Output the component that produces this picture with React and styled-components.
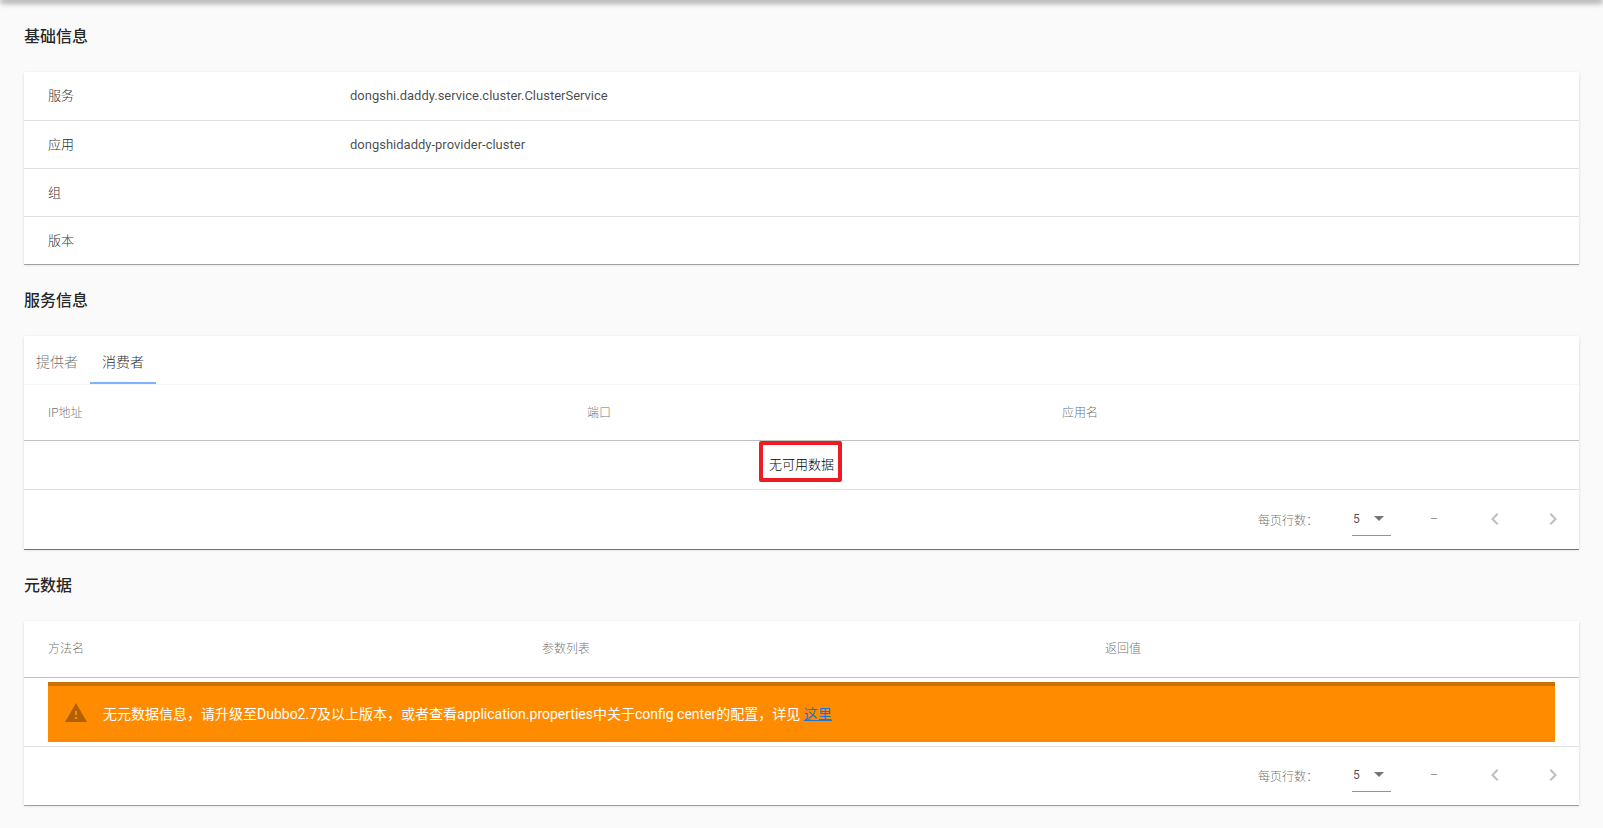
import React from "react";
import styled, { createGlobalStyle } from "styled-components";

const FONT = `Roboto, "Noto Sans CJK SC", sans-serif`;

const GlobalStyle = createGlobalStyle`
  html, body {
    margin: 0;
    padding: 0;
    background: #fafafa;
    font-family: ${FONT};
  }
`;

const Page = styled.div`
  position: relative;
  height: 828px;
  padding: 0 24px;
  box-sizing: border-box;
  overflow: hidden;
  &::before {
    content: "";
    position: absolute;
    top: -4px;
    left: 0;
    right: 0;
    height: 4px;
    box-shadow: 0 2px 4px -1px rgba(0, 0, 0, 0.3), 0 4px 5px 0 rgba(0, 0, 0, 0.2), 0 1px 10px 0 rgba(0, 0, 0, 0.14);
  }
`;

const Heading = styled.h3`
  height: 72px;
  box-sizing: border-box;
  padding-bottom: 2px;
  margin: 0;
  display: flex;
  align-items: center;
  font-size: 16px;
  font-weight: 500;
  color: rgba(0, 0, 0, 0.87);
`;

const Card = styled.div`
  position: relative;
  background: #fff;
  box-shadow: 0 1px 0 0 rgba(0, 0, 0, ${(p) => (p.$strong ? 0.5 : 0.3)}), 0 1px 3px 0 rgba(0, 0, 0, 0.14);
`;

const InfoRow = styled.div`
  display: grid;
  grid-template-columns: 302px 1fr;
  align-items: center;
  height: 48px;
  box-sizing: border-box;
  padding-left: 24px;
  font-size: 13px;
  font-weight: 300;
  color: rgba(0, 0, 0, 0.87);
  border-bottom: 1px solid rgba(0, 0, 0, 0.12);
  &:first-child {
    height: 49px;
    padding-bottom: 1px;
  }
  &:last-child {
    height: 47px;
    border-bottom: 0;
  }
`;

const InfoLabel = styled.span`
  padding-bottom: 2px;
`;

const InfoValue = styled.span`
  font-weight: 400;
  color: rgba(0, 0, 0, 0.72);
`;

const Tabs = styled.div`
  display: flex;
  height: 48px;
`;

const Tab = styled.div`
  width: 66px;
  box-sizing: border-box;
  padding-top: 3px;
  display: flex;
  align-items: center;
  justify-content: center;
  font-size: 14px;
  font-weight: 300;
  color: ${(p) => (p.$active ? "rgba(0,0,0,.87)" : "rgba(0,0,0,.6)")};
  border-bottom: 2px solid ${(p) => (p.$active ? "#82b1ff" : "transparent")};
`;

const HeadRow = styled.div`
  display: grid;
  grid-template-columns: ${(p) => p.$columns};
  align-items: center;
  height: 57px;
  box-sizing: border-box;
  padding: 0 0 ${(p) => (p.$ruled ? "2px" : "4px")} 24px;
  font-size: 12px;
  font-weight: 300;
  color: rgba(0, 0, 0, 0.6);
  border-top: ${(p) => (p.$ruled ? "1px solid rgba(0,0,0,.04)" : "0")};
  border-bottom: 1px solid rgba(0, 0, 0, 0.24);
`;

const EmptyRow = styled.div`
  display: flex;
  align-items: center;
  justify-content: center;
  height: 49px;
  box-sizing: border-box;
  padding-bottom: 3px;
  font-size: 13px;
  font-weight: 300;
  color: #000;
  border-bottom: 1px solid rgba(0, 0, 0, 0.12);
`;

const Highlight = styled.div`
  position: absolute;
  top: 105px;
  left: 735px;
  width: 83px;
  height: 41px;
  box-sizing: border-box;
  border: 4px solid #ed1c24;
  border-radius: 2px;
`;

const AlertRow = styled.div`
  padding: 4px 24px;
  border-bottom: 1px solid rgba(0, 0, 0, 0.12);
`;

const Alert = styled.div`
  display: flex;
  align-items: center;
  gap: 15px;
  height: 60px;
  box-sizing: border-box;
  padding: 0 0 2px 16px;
  background: #ff8c00;
  border-top: 4px solid rgba(0, 0, 0, 0.2);
  color: #fff;
  font-size: 14px;
`;

const AlertIcon = styled.svg`
  width: 24px;
  height: 24px;
  fill: rgba(0, 0, 0, 0.3);
  flex: none;
`;

const AlertLink = styled.a`
  color: #1976d2;
  text-decoration: underline;
`;

const Footer = styled.div`
  display: flex;
  align-items: center;
  height: ${(p) => (p.$tall ? "59px" : "58px")};
  box-sizing: border-box;
  padding: 0 0 ${(p) => (p.$tall ? "1px" : "2px")} 1234px;
  font-size: 12px;
  font-weight: 300;
  color: rgba(0, 0, 0, 0.6);
`;

const RowsLabel = styled.span`
  width: 94px;
  flex: none;
`;

const Select = styled.div`
  width: 39px;
  height: 34px;
  box-sizing: border-box;
  padding-left: 1px;
  flex: none;
  display: flex;
  align-items: center;
  justify-content: space-between;
  font-weight: 400;
  color: rgba(0, 0, 0, 0.7);
  border-bottom: 1px solid rgba(0, 0, 0, 0.42);
`;

const Caret = styled.i`
  width: 0;
  height: 0;
  margin-right: 7px;
  border-left: 5px solid transparent;
  border-right: 5px solid transparent;
  border-top: 5px solid rgba(0, 0, 0, 0.54);
`;

const Range = styled.span`
  width: 53px;
  margin-left: 39px;
  flex: none;
`;

const Chevron = styled.svg`
  width: 24px;
  height: 24px;
  flex: none;
  margin-right: 34px;
  fill: rgba(0, 0, 0, 0.26);
`;

const Pagination = ({ tall }) => (
  <Footer $tall={tall}>
    <RowsLabel>每页行数：</RowsLabel>
    <Select>
      5
      <Caret />
    </Select>
    <Range>–</Range>
    <Chevron viewBox="0 0 24 24">
      <path d="M15.41 7.41 14 6l-6 6 6 6 1.41-1.41L10.83 12z" />
    </Chevron>
    <Chevron viewBox="0 0 24 24">
      <path d="M10 6 8.59 7.41 13.17 12l-4.58 4.590L10 18l6-6z" />
    </Chevron>
  </Footer>
);

const CONSUMER_COLUMNS = "539px 475px 1fr";
const META_COLUMNS = "494px 563px 1fr";

const App = () => {
  return (
    <Page>
      <GlobalStyle />
      <Heading>基础信息</Heading>
      <Card>
        <InfoRow>
          <InfoLabel>服务</InfoLabel>
          <InfoValue>dongshi.daddy.service.cluster.ClusterService</InfoValue>
        </InfoRow>
        <InfoRow>
          <InfoLabel>应用</InfoLabel>
          <InfoValue>dongshidaddy-provider-cluster</InfoValue>
        </InfoRow>
        <InfoRow>
          <InfoLabel>组</InfoLabel>
        </InfoRow>
        <InfoRow>
          <InfoLabel>版本</InfoLabel>
        </InfoRow>
      </Card>

      <Heading>服务信息</Heading>
      <Card $strong>
        <Tabs>
          <Tab>提供者</Tab>
          <Tab $active>消费者</Tab>
        </Tabs>
        <HeadRow $columns={CONSUMER_COLUMNS} $ruled>
          <span>IP地址</span>
          <span>端口</span>
          <span>应用名</span>
        </HeadRow>
        <EmptyRow>无可用数据</EmptyRow>
        <Highlight />
        <Pagination tall />
      </Card>

      <Heading>元数据</Heading>
      <Card>
        <HeadRow $columns={META_COLUMNS}>
          <span>方法名</span>
          <span>参数列表</span>
          <span>返回值</span>
        </HeadRow>
        <AlertRow>
          <Alert>
            <AlertIcon viewBox="0 0 24 24">
              <path d="M1 21h22L12 2 1 21zm12-3h-2v-2h2v2zm0-4h-2v-4h2v4z" />
            </AlertIcon>
            <span>
              无元数据信息，请升级至Dubbo2.7及以上版本，或者查看application.properties中关于config center的配置，详见{" "}
              <AlertLink href="#">这里</AlertLink>
            </span>
          </Alert>
        </AlertRow>
        <Pagination />
      </Card>
    </Page>
  );
};

export default App;
